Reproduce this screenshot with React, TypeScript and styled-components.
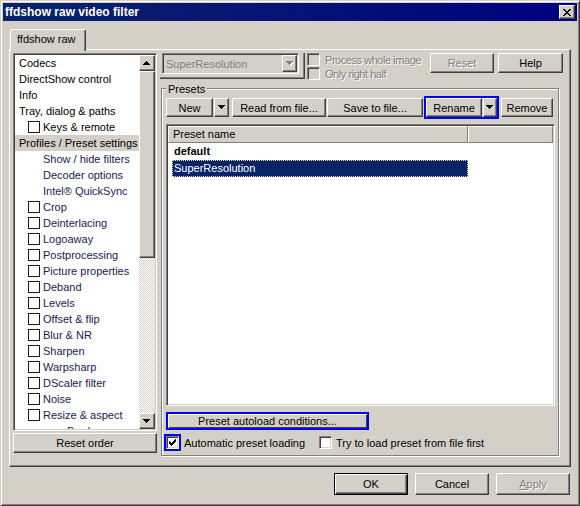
import React from 'react'
import styled, { createGlobalStyle, css } from 'styled-components'

const GlobalStyle = createGlobalStyle`
	* {
		box-sizing: border-box;
	}
	html,
	body {
		margin: 0;
		padding: 0;
		background: #d4d0c8;
	}
	body {
		font-family: "Liberation Sans", Arial, sans-serif;
		font-size: 11px;
		color: #000;
	}
`

const raised = css`
	border: 1px solid;
	border-color: #fff #404040 #404040 #fff;
	box-shadow: inset -1px -1px #808080;
	background: #d4d0c8;
`

const sunken = css`
	border: 1px solid;
	border-color: #808080 #fff #fff #808080;
	box-shadow: inset 1px 1px #404040, inset -1px -1px #d4d0c8;
`

const Window = styled.div`
	width: 580px;
	height: 506px;
	padding: 2px;
	display: flex;
	flex-direction: column;
	background: #d4d0c8;
	border: 1px solid;
	border-color: #d4d0c8 #404040 #404040 #d4d0c8;
	box-shadow: inset 1px 1px #fff, inset -1px -1px #808080;
`

const TitleBar = styled.div`
	height: 18px;
	flex: none;
	display: flex;
	align-items: center;
	padding: 0 2px;
	background: linear-gradient(to right, #0a246a, #000080);
	color: #fff;
`

const Title = styled.span`
	flex: 1;
	font-size: 12px;
	font-weight: bold;
	white-space: nowrap;
`

const CloseButton = styled.div`
	${raised}
	width: 16px;
	height: 14px;
	display: flex;
	align-items: center;
	justify-content: center;
`

const Body = styled.div`
	flex: 1;
	display: flex;
	flex-direction: column;
	padding: 0 6px;
`

const TabStrip = styled.div`
	height: 28px;
	flex: none;
	display: flex;
	align-items: flex-start;
	padding: 8px 0 0 1px;
`

const Tab = styled.div`
	position: relative;
	z-index: 1;
	width: 76px;
	height: 22px;
	padding-left: 6px;
	line-height: 19px;
	white-space: nowrap;
	background: #d4d0c8;
	border: 1px solid;
	border-bottom: none;
	border-color: #fff #404040 transparent #fff;
	border-radius: 2px 2px 0 0;
	box-shadow: inset -1px 0 #808080;
`

const Page = styled.div`
	height: 418px;
	flex: none;
	display: flex;
	gap: 3px;
	padding: 3px;
	border: 1px solid;
	border-color: #fff #404040 #404040 #fff;
	box-shadow: inset -1px -1px #808080;
`

const LeftColumn = styled.div`
	width: 144px;
	flex: none;
	display: flex;
	flex-direction: column;
	gap: 2px;
`

const TreeBox = styled.div`
	${sunken}
	height: 378px;
	flex: none;
	padding: 1px;
	display: flex;
	background: #fff;
`

const TreeItems = styled.div`
	flex: 1;
	overflow: hidden;
	display: flex;
	flex-direction: column;
`

const TreeRow = styled.div<{ $indent: number; $selected?: boolean; $color: string }>`
	height: 16px;
	flex: none;
	display: flex;
	align-items: center;
	gap: 3px;
	padding-left: ${(p) => p.$indent}px;
	white-space: nowrap;
	color: ${(p) => p.$color};
	background: ${(p) => (p.$selected ? '#d4d0c8' : 'transparent')};
`

const TreeCheck = styled.span`
	width: 12px;
	height: 12px;
	flex: none;
	border: 1px solid #1a1a1a;
	background: #fff;
`

const ScrollBar = styled.div`
	width: 16px;
	flex: none;
	display: flex;
	flex-direction: column;
`

const ScrollButton = styled.div`
	${raised}
	height: 16px;
	flex: none;
	display: flex;
	align-items: center;
	justify-content: center;
`

const Thumb = styled.div<{ $h: number }>`
	${raised}
	height: ${(p) => p.$h}px;
	flex: none;
`

const Track = styled.div`
	flex: 1;
	background: repeating-conic-gradient(#d4d0c8 0% 25%, #fff 0% 50%) 0 0 / 2px 2px;
`

const Button = styled.button<{ $w: number; $h?: number; $ml?: number; $mr?: number; $default?: boolean; $focus?: boolean }>`
	${raised}
	width: ${(p) => p.$w}px;
	height: ${(p) => p.$h ?? 19}px;
	margin: 0 ${(p) => p.$mr ?? 0}px 0 ${(p) => (p.$ml === undefined ? '0' : p.$ml < 0 ? 'auto' : `${p.$ml}px`)};
	padding: 0;
	flex: none;
	display: flex;
	align-items: center;
	justify-content: center;
	font-family: inherit;
	font-size: 11px;
	white-space: nowrap;
	cursor: default;
	color: ${(p) => (p.disabled ? '#808080' : '#000')};
	text-shadow: ${(p) => (p.disabled ? '1px 1px #fff' : 'none')};

	${(p) =>
		p.$default &&
		css`
			border-color: #000;
			box-shadow: inset 1px 1px #fff, inset -1px -1px #404040, inset -2px -2px #808080;
		`}

	${(p) =>
		p.$focus &&
		css`
			border: 2px solid #0000ff;
			box-shadow: inset 1px 1px #fff, inset -1px -1px #404040;
		`}
`

const RightColumn = styled.div`
	flex: 1;
	display: flex;
	flex-direction: column;
`

const TopRow = styled.div`
	height: 26px;
	flex: none;
	display: flex;
	align-items: flex-start;
`

const ComboFrame = styled.div`
	width: 145px;
	height: 26px;
	flex: none;
	padding-left: 2px;
	border-right: 1px solid #404040;
	border-bottom: 1px solid #404040;
	box-shadow: inset -1px -1px #808080;
`

const Combo = styled.div`
	${sunken}
	width: 137px;
	height: 21px;
	padding: 1px 1px 1px 3px;
	display: flex;
	align-items: center;
	background: #d4d0c8;
`

const ComboText = styled.span`
	flex: 1;
	color: #808080;
`

const ComboButton = styled.div`
	${raised}
	width: 15px;
	height: 17px;
	display: flex;
	align-items: center;
	justify-content: center;
`

const CheckColumn = styled.div`
	margin-left: 2px;
	display: flex;
	flex-direction: column;
	gap: 1px;
`

const CheckItem = styled.div<{ $w?: number; $h?: number; $gap?: number }>`
	display: flex;
	align-items: center;
	gap: ${(p) => p.$gap ?? 5}px;
	height: ${(p) => p.$h ?? 13}px;
	width: ${(p) => (p.$w ? `${p.$w}px` : 'auto')};
	flex: none;
	white-space: nowrap;
`

const CheckBox = styled.span<{ $disabled?: boolean }>`
	${sunken}
	width: 13px;
	height: 13px;
	flex: none;
	display: flex;
	align-items: center;
	justify-content: center;
	background: ${(p) => (p.$disabled ? '#d4d0c8' : '#fff')};
`

const DisabledText = styled.span`
	color: #808080;
	text-shadow: 1px 1px #fff;
	letter-spacing: -0.45px;
`

const GroupBox = styled.div`
	position: relative;
	height: 368px;
	flex: none;
	margin: 9px 8px 0 1px;
	padding: 7px 2px 0 4px;
	display: flex;
	flex-direction: column;
	border: 1px solid #808080;
	box-shadow: inset 1px 1px #fff, 1px 1px #fff;
`

const GroupLabel = styled.span`
	position: absolute;
	top: -6px;
	left: 4px;
	padding: 0 2px;
	line-height: 13px;
	background: #d4d0c8;
`

const ButtonRow = styled.div`
	height: 23px;
	flex: none;
	display: flex;
	align-items: center;
`

const FocusRing = styled.div<{ $ml?: number }>`
	margin-left: ${(p) => p.$ml ?? 0}px;
	padding: 0;
	display: flex;
	gap: 1px;
	flex: none;
	border: 2px solid #0000ff;
`

const ListView = styled.div`
	${sunken}
	width: 389px;
	height: 282px;
	flex: none;
	margin-top: 5px;
	padding: 1px;
	display: flex;
	flex-direction: column;
	background: #fff;
`

const Header = styled.div`
	height: 17px;
	flex: none;
	display: flex;
`

const HeaderCell = styled.div<{ $w?: number }>`
	width: ${(p) => (p.$w ? `${p.$w}px` : 'auto')};
	flex: ${(p) => (p.$w ? 'none' : '1')};
	padding-left: 4px;
	line-height: 15px;
	background: #d4d0c8;
	border: 1px solid;
	border-color: #fff #808080 #808080 #fff;
`

const Row = styled.div`
	height: 17px;
	flex: none;
	display: flex;
	padding-left: 4px;
`

const RowCell = styled.div<{ $selected?: boolean; $bold?: boolean }>`
	width: 296px;
	padding-left: 2px;
	line-height: 17px;
	font-weight: ${(p) => (p.$bold ? 'bold' : 'normal')};
	color: ${(p) => (p.$selected ? '#fff' : '#000')};
	background: ${(p) => (p.$selected ? '#0a246a' : 'transparent')};
	outline: ${(p) => (p.$selected ? '1px dotted #f5db95' : 'none')};
	outline-offset: -1px;
`

const AutoloadRow = styled.div`
	margin-top: 6px;
	flex: none;
`

const OptionsRow = styled.div`
	height: 17px;
	flex: none;
	margin: 4px 0 0 -2px;
	display: flex;
	align-items: center;
`

const CheckFocus = styled.span`
	width: 17px;
	height: 17px;
	flex: none;
	border: 2px solid #0000ff;
`

const OptionLabel = styled.span<{ $ml: number }>`
	margin-left: ${(p) => p.$ml}px;
`

const Footer = styled.div`
	flex: none;
	display: flex;
	justify-content: flex-end;
	gap: 7px;
	margin-top: 6px;
	padding-right: 1px;
`

const Arrow: React.FC<{ up?: boolean; disabled?: boolean }> = ({ up, disabled }) => {
	const d = up ? 'M3 0h1v1H3zM2 1h3v1H2zM1 2h5v1H1zM0 3h7v1H0z' : 'M0 0h7v1H0zM1 1h5v1H1zM2 2h3v1H2zM3 3h1v1H3z'
	return (
		<svg width="8" height="5" viewBox="0 0 8 5" shapeRendering="crispEdges">
			{disabled && <path d={d} fill="#fff" transform="translate(1 1)" />}
			<path d={d} fill={disabled ? '#808080' : '#000'} />
		</svg>
	)
}

const CloseGlyph = () => (
	<svg width="8" height="7" viewBox="0 0 8 7" shapeRendering="crispEdges">
		<path
			d="M0 0h2v1H0zM6 0h2v1H6zM1 1h2v1H1zM5 1h2v1H5zM2 2h4v1H2zM3 3h2v1H3zM2 4h4v1H2zM1 5h2v1H1zM5 5h2v1H5zM0 6h2v1H0zM6 6h2v1H6z"
			fill="#000"
		/>
	</svg>
)

const CheckGlyph = () => (
	<svg width="7" height="7" viewBox="0 0 7 7" shapeRendering="crispEdges">
		<path d="M6 0h1v1H6zM5 1h2v1H5zM0 2h1v1H0zM4 2h3v1H4zM0 3h2v1H0zM3 3h3v1H3zM0 4h5v1H0zM1 5h3v1H1zM2 6h1v1H2z" fill="#000" />
	</svg>
)

type TreeEntry = { label: string; indent: number; check?: boolean; selected?: boolean; filter?: boolean }

const tree: TreeEntry[] = [
	{ label: 'Codecs', indent: 4 },
	{ label: 'DirectShow control', indent: 4 },
	{ label: 'Info', indent: 4 },
	{ label: 'Tray, dialog & paths', indent: 4 },
	{ label: 'Keys & remote', indent: 13, check: true },
	{ label: 'Profiles / Preset settings', indent: 4, selected: true },
	{ label: 'Show / hide filters', indent: 28, filter: true },
	{ label: 'Decoder options', indent: 28, filter: true },
	{ label: 'Intel® QuickSync', indent: 28, filter: true },
	...[
		'Crop',
		'Deinterlacing',
		'Logoaway',
		'Postprocessing',
		'Picture properties',
		'Deband',
		'Levels',
		'Offset & flip',
		'Blur & NR',
		'Sharpen',
		'Warpsharp',
		'DScaler filter',
		'Noise',
		'Resize & aspect',
	].map((label) => ({ label, indent: 13, check: true, filter: true })),
	{ label: 'Borders', indent: 52, filter: true },
]

const App: React.FC = () => {
	return (
		<>
			<GlobalStyle />
			<Window>
				<TitleBar>
					<Title>ffdshow raw video filter</Title>
					<CloseButton>
						<CloseGlyph />
					</CloseButton>
				</TitleBar>
				<Body>
					<TabStrip>
						<Tab>ffdshow raw</Tab>
					</TabStrip>
					<Page>
						<LeftColumn>
							<TreeBox>
								<TreeItems>
									{tree.map((item) => (
										<TreeRow
											key={item.label}
											$indent={item.indent}
											$selected={item.selected}
											$color={item.filter ? '#1a1a52' : '#000'}
										>
											{item.check && <TreeCheck />}
											{item.label}
										</TreeRow>
									))}
								</TreeItems>
								<ScrollBar>
									<ScrollButton>
										<Arrow up />
									</ScrollButton>
									<Thumb $h={187} />
									<Track />
									<ScrollButton>
										<Arrow />
									</ScrollButton>
								</ScrollBar>
							</TreeBox>
							<Button $w={144} $h={20}>
								Reset order
							</Button>
						</LeftColumn>

						<RightColumn>
							<TopRow>
								<ComboFrame>
									<Combo>
										<ComboText>SuperResolution</ComboText>
										<ComboButton>
											<Arrow disabled />
										</ComboButton>
									</Combo>
								</ComboFrame>
								<CheckColumn>
									<CheckItem>
										<CheckBox $disabled />
										<DisabledText>Process whole image</DisabledText>
									</CheckItem>
									<CheckItem>
										<CheckBox $disabled />
										<DisabledText>Only right half</DisabledText>
									</CheckItem>
								</CheckColumn>
								<Button $w={64} $h={20} $ml={-1} disabled>
									Reset
								</Button>
								<Button $w={65} $h={20} $ml={4} $mr={4}>
									Help
								</Button>
							</TopRow>

							<GroupBox>
								<GroupLabel>Presets</GroupLabel>
								<ButtonRow>
									<Button $w={47}>New</Button>
									<Button $w={15} $ml={1}>
										<Arrow />
									</Button>
									<Button $w={94} $ml={3}>
										Read from file...
									</Button>
									<Button $w={96} $ml={1}>
										Save to file...
									</Button>
									<FocusRing $ml={1}>
										<Button $w={56}>Rename</Button>
										<Button $w={14}>
											<Arrow />
										</Button>
									</FocusRing>
									<Button $w={52} $ml={2}>
										Remove
									</Button>
								</ButtonRow>

								<ListView>
									<Header>
										<HeaderCell $w={300}>Preset name</HeaderCell>
										<HeaderCell />
									</Header>
									<Row>
										<RowCell $bold>default</RowCell>
									</Row>
									<Row>
										<RowCell $selected>SuperResolution</RowCell>
									</Row>
								</ListView>

								<AutoloadRow>
									<Button $w={203} $h={18} $focus>
										Preset autoload conditions...
									</Button>
								</AutoloadRow>

								<OptionsRow>
									<CheckItem $w={155} $h={17} $gap={0}>
										<CheckFocus>
											<CheckBox>
												<CheckGlyph />
											</CheckBox>
										</CheckFocus>
										<OptionLabel $ml={3}>Automatic preset loading</OptionLabel>
									</CheckItem>
									<CheckItem $gap={0}>
										<CheckBox />
										<OptionLabel $ml={4}>Try to load preset from file first</OptionLabel>
									</CheckItem>
								</OptionsRow>
							</GroupBox>
						</RightColumn>
					</Page>
					<Footer>
						<Button $w={74} $h={22} $default>
							OK
						</Button>
						<Button $w={74} $h={22}>
							Cancel
						</Button>
						<Button $w={74} $h={22} disabled>
							<u>A</u>pply
						</Button>
					</Footer>
				</Body>
			</Window>
		</>
	)
}

export default App
